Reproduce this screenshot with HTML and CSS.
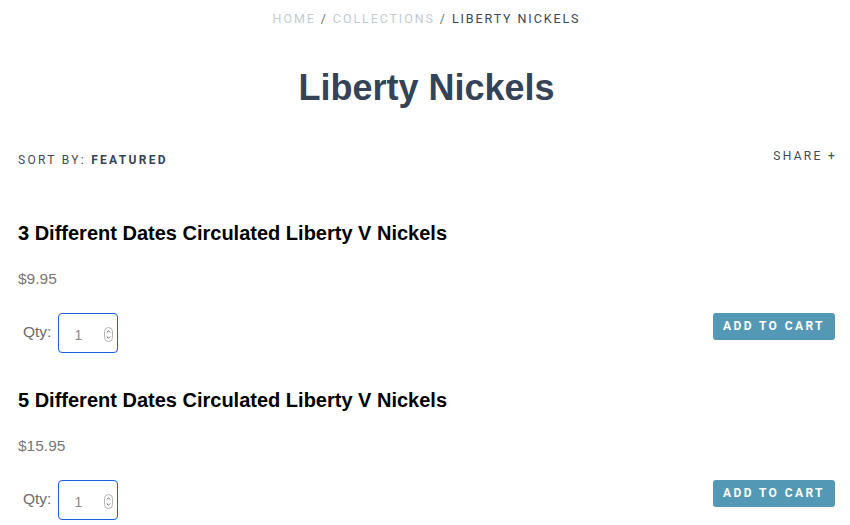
FILE: index.html
```html
<!DOCTYPE html>
<html>
<head>
<meta charset="utf-8">
<link rel="stylesheet" href="styles.css">
</head>
<body>
<div class="page">
  <nav class="crumbs">
    <a class="crumb-link">HOME</a> <span class="sep">/</span> <a class="crumb-link">COLLECTIONS</a> <span class="sep">/</span> <span class="current">LIBERTY NICKELS</span>
  </nav>
  <h1 class="title">Liberty Nickels</h1>
  <div class="toolbar">
    <div class="sort">SORT BY: <strong>FEATURED</strong></div>
    <div class="share">SHARE +</div>
  </div>
  <div class="products">
    <div class="product">
      <h2 class="name">3 Different Dates Circulated Liberty V Nickels</h2>
      <div class="price">$9.95</div>
      <div class="buy">
        <div class="qty">
          <span class="qty-label">Qty:</span>
          <div class="qty-box">
            <span class="qty-val">1</span>
            <svg class="spin" width="9" height="15" viewBox="0 0 9 15"><rect x="0.5" y="0.5" width="8" height="14" rx="4" fill="#fff" stroke="#b5b5b5"/><path d="M2.7 5.6 L4.5 3.8 L6.3 5.6" fill="none" stroke="#555" stroke-width="0.9"/><path d="M2.7 9.4 L4.5 11.2 L6.3 9.4" fill="none" stroke="#555" stroke-width="0.9"/></svg>
          </div>
        </div>
        <button class="cart">ADD TO CART</button>
      </div>
    </div>
    <div class="product">
      <h2 class="name">5 Different Dates Circulated Liberty V Nickels</h2>
      <div class="price">$15.95</div>
      <div class="buy">
        <div class="qty">
          <span class="qty-label">Qty:</span>
          <div class="qty-box">
            <span class="qty-val">1</span>
            <svg class="spin" width="9" height="15" viewBox="0 0 9 15"><rect x="0.5" y="0.5" width="8" height="14" rx="4" fill="#fff" stroke="#b5b5b5"/><path d="M2.7 5.6 L4.5 3.8 L6.3 5.6" fill="none" stroke="#555" stroke-width="0.9"/><path d="M2.7 9.4 L4.5 11.2 L6.3 9.4" fill="none" stroke="#555" stroke-width="0.9"/></svg>
          </div>
        </div>
        <button class="cart">ADD TO CART</button>
      </div>
    </div>
  </div>
</div>
</body>
</html>
```
FILE: styles.css
```css
* { box-sizing: border-box; }
html, body { margin: 0; padding: 0; background: #fff; }
body { font-family: "Liberation Sans", Arial, sans-serif; overflow: hidden; }
.page { padding: 0 15px 0 18px; }
.crumbs {
  text-align: center;
  font-family: Roboto, "Liberation Sans", sans-serif;
  font-size: 12.5px;
  letter-spacing: 1.9px;
  padding-top: 11px;
  line-height: 15px;
  color: #6b7580;
}
.crumb-link { color: #c3cbd1; }
.sep { color: #6b7580; }
.current { color: #3a4656; }
.title {
  margin: 0;
  margin-top: 42px;
  text-align: center;
  font-size: 36px;
  font-weight: bold;
  color: #354357;
  line-height: 40px;
}
.toolbar {
  display: flex;
  justify-content: space-between;
  margin-top: 32px;
  font-family: Roboto, "Liberation Sans", sans-serif;
  font-size: 12px;
  letter-spacing: 2.3px;
  color: #3f4a58;
}
.sort { padding-top: 13px; line-height: 14px; }
.sort strong { font-weight: bold; color: #354357; }
.share { padding-top: 9px; line-height: 14px; margin-right: -2px; }
.products {
  margin-top: 54px;
  display: flex;
  flex-direction: column;
  gap: 35px;
}
.name {
  margin: 0;
  font-size: 20px;
  font-weight: bold;
  color: #000;
  line-height: 24px;
}
.price {
  margin-top: 24px;
  font-size: 15.5px;
  color: #777;
  line-height: 20px;
}
.buy {
  display: flex;
  justify-content: space-between;
  align-items: flex-start;
  margin-top: 24px;
}
.qty { display: flex; align-items: center; padding-left: 5px; }
.qty-label { font-size: 15.5px; color: #6d6d6d; margin-right: 7px; margin-top: -3px; }
.qty-box {
  width: 60px;
  height: 40px;
  border: 1px solid #1a5fe0;
  border-radius: 4px;
  display: flex;
  align-items: center;
  padding: 0 4px 0 15px;
  justify-content: space-between;
}
.qty-val { font-size: 14px; color: #888; margin-top: 4px; }
.spin { margin-top: 2px; }
.cart {
  border: 0;
  background: #5399b5;
  color: #fff;
  border-radius: 3px;
  height: 27px;
  width: 122px;
  padding: 0;
  font-family: Roboto, "Liberation Sans", sans-serif;
  font-weight: bold;
  font-size: 12px;
  letter-spacing: 2.4px;
  line-height: 27px;
}
```
